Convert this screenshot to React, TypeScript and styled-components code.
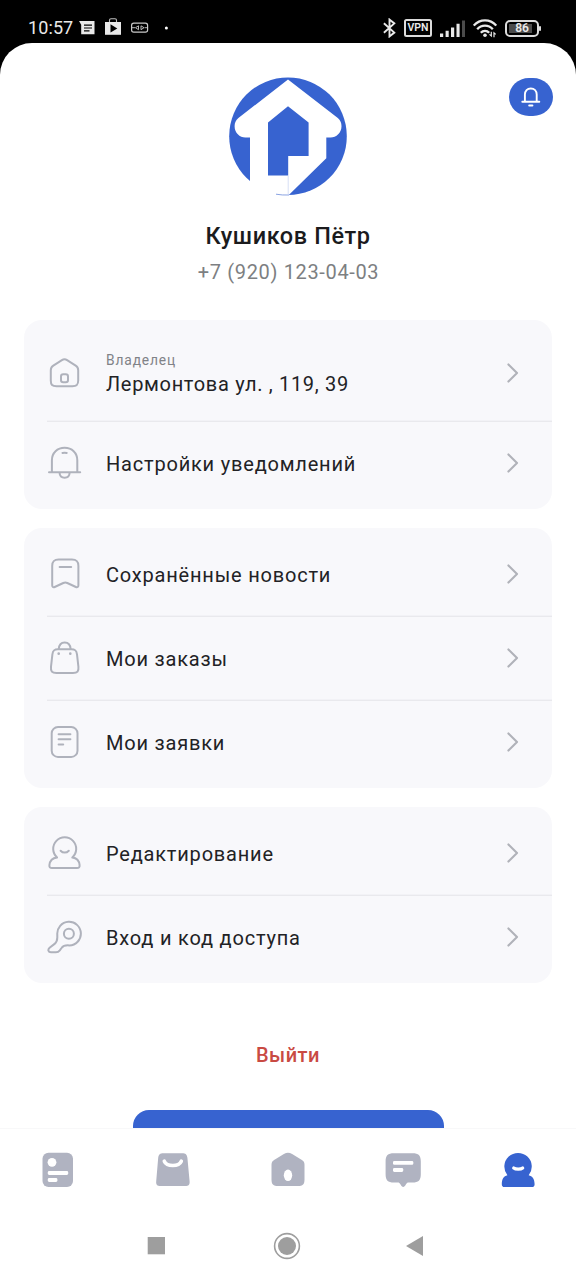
import React from 'react';
import styled, { createGlobalStyle } from 'styled-components';

const GlobalStyle = createGlobalStyle`
  html, body { margin: 0; background: #000; }
  body { font-family: Roboto, "Noto Sans", sans-serif; }
  svg { display: block; flex: none; }
`;

const BLUE = '#3763d0';
const GREY = '#afb2bc';

const Screen = styled.div`
  width: 576px;
  height: 1280px;
  display: flex;
  flex-direction: column;
  background: #000;
  overflow: hidden;
`;

const StatusBar = styled.header`
  height: 43px;
  box-sizing: border-box;
  padding: 12px 33px 0 28px;
  display: flex;
  justify-content: space-between;
  color: #e9e9e9;
`;

const StatusGroup = styled.div<{ $gap: number }>`
  height: 32px;
  display: flex;
  align-items: center;
  gap: ${(p) => p.$gap}px;
`;

const Clock = styled.span`
  width: 46px;
  font-size: 18px;
  line-height: 32px;
  letter-spacing: 0.1px;
  white-space: nowrap;
`;

const Sheet = styled.main`
  flex: 1;
  min-height: 0;
  display: flex;
  flex-direction: column;
  background: #fff;
  border-radius: 32px 32px 0 0;
`;

const Content = styled.div`
  height: 1086px;
  box-sizing: border-box;
  padding: 33px 24px 0;
  display: flex;
  flex-direction: column;
  overflow: hidden;
`;

const Profile = styled.section`
  flex: none;
  height: 244px;
  display: grid;
  grid-template-columns: 1fr 120px 1fr;
  grid-template-rows: 120px 64px 1fr;
  align-items: start;
  text-align: center;
`;

const Logo = styled.svg`
  grid-column: 2;
`;

const BellButton = styled.button`
  grid-column: 3;
  justify-self: end;
  width: 44px;
  height: 38px;
  margin: 2px -1px 0 0;
  padding: 0;
  border: 0;
  border-radius: 20px / 19px;
  background: ${BLUE};
  display: grid;
  place-items: center;
`;

const Name = styled.h1`
  grid-column: 1 / -1;
  margin: 0;
  padding-top: 26px;
  font-size: 23.5px;
  line-height: 28px;
  font-weight: 500;
  letter-spacing: 0.6px;
  color: #1b1b1d;
`;

const Phone = styled.p`
  grid-column: 1 / -1;
  margin: 0;
  padding-left: 1px;
  font-size: 20px;
  line-height: 24px;
  letter-spacing: 0.65px;
  color: #7d7f82;
`;

const Cards = styled.div`
  display: flex;
  flex-direction: column;
  gap: 19.2px;
`;

const Card = styled.section`
  padding: 4px 0;
  border-radius: 18px;
  background: #f8f8fb;
`;

const Row = styled.div<{ $tall?: boolean }>`
  height: ${(p) => (p.$tall ? 97 : 84)}px;
  box-sizing: border-box;
  margin-left: 23px;
  padding-right: 32px;
  display: flex;
  align-items: center;

  & + & {
    box-shadow: 0 -0.5px 0 #ececf0, 0 1px 0 #e9e9ed inset;
  }
`;

const RowText = styled.div<{ $tall?: boolean }>`
  flex: 1;
  margin-left: 23px;
  padding-top: ${(p) => (p.$tall ? 4 : 2.6)}px;
  display: flex;
  flex-direction: column;
`;

const Caption = styled.span`
  margin-bottom: 1.5px;
  font-size: 13.8px;
  line-height: 18px;
  letter-spacing: 0.85px;
  color: #808287;
`;

const Label = styled.span<{ $tight?: boolean }>`
  font-size: 20px;
  line-height: 27px;
  letter-spacing: ${(p) => (p.$tight ? 0.68 : 0.8)}px;
  color: #222225;
  white-space: nowrap;
`;

const Logout = styled.button`
  align-self: center;
  margin-top: 60px;
  padding: 0;
  border: 0;
  background: none;
  font-family: inherit;
  font-size: 20px;
  line-height: 24px;
  font-weight: 500;
  letter-spacing: 0.5px;
  color: #c94a43;
`;

const PrimaryButton = styled.div`
  align-self: center;
  flex: none;
  width: 311px;
  height: 60px;
  margin-top: 42.6px;
  border-radius: 16px;
  background: ${BLUE};
`;

const TabBar = styled.nav`
  height: 82px;
  box-sizing: border-box;
  padding-bottom: 1px;
  display: grid;
  grid-template-columns: repeat(5, 1fr);
  justify-items: center;
  align-items: center;
  box-shadow: 0 -1px 0 #f8f8f9;
`;

const SystemBar = styled.footer`
  height: 69px;
  box-sizing: border-box;
  padding: 0 153px 0 147px;
  display: flex;
  justify-content: space-between;
  align-items: center;
`;

const LineIcon = ({ children }: { children: React.ReactNode }) => (
  <svg width="36" height="36" viewBox="0 0 36 36" fill="none" stroke={GREY} strokeWidth="2" strokeLinecap="round" strokeLinejoin="round">
    {children}
  </svg>
);

const icons = {
  home: (
    <LineIcon>
      <path d="M3.8 15.2C3.8 12.8 4.4 11.8 6.3 10.6L14.9 5.1C16.8 3.9 18.2 3.9 20.1 5.1L28.7 10.6C30.6 11.8 31.2 12.8 31.2 15.2V25.5C31.2 29.9 29.8 31.2 25.4 31.2H9.6C5.2 31.2 3.8 29.9 3.8 25.5Z" />
      <rect x="14" y="19.2" width="7" height="8" rx="2.2" />
    </LineIcon>
  ),
  bell: (
    <LineIcon>
      <path d="M4.9 27.3V15.2C4.9 7.6 10.4 2.8 17.6 2.8S30.3 7.6 30.3 15.2V27.3M2 27.3H33.2M12.5 27.5C12.7 30.8 14.6 32.8 17.6 32.8S22.5 30.8 22.7 27.5M15.4 7.9Q17.6 7.5 19.8 7.9" />
    </LineIcon>
  ),
  bookmark: (
    <LineIcon>
      <path d="M5.2 10C5.2 5.2 6.9 3.5 11.7 3.5H24.9C29.7 3.5 31.4 5.2 31.4 10V29.3C31.4 31 30.4 31.7 28.9 31L20.3 27C18.8 26.3 17.8 26.3 16.3 27L7.7 31C6.2 31.7 5.2 31 5.2 29.3Z" />
      <path d="M12.6 11H24.2" />
    </LineIcon>
  ),
  bag: (
    <LineIcon>
      <path d="M5.4 14.3C5.9 10.5 7.3 9.3 11 9.3H24.4C28.1 9.3 29.5 10.5 30 14.3L31.4 26.6C31.9 31.4 30.4 33 26 33H9.4C5 33 3.5 31.4 4 26.6Z" />
      <path d="M11.8 9C12 5 14.2 2.4 17.7 2.4S23.4 5 23.6 9" />
      <path d="M11.7 13.6V13.7M23.3 13.6V13.7" strokeWidth="2.6" />
    </LineIcon>
  ),
  list: (
    <LineIcon>
      <rect x="4.7" y="3" width="25.8" height="30" rx="6.3" />
      <path d="M11.6 10.2H23.4M11.6 15.3H23.4M11.6 20.5H16.2" />
    </LineIcon>
  ),
  user: (
    <LineIcon>
      <path d="M10.1 22.5A11.5 11.5 0 1 1 25.3 22.5C29.8 23 32.2 25.8 32.6 30.2C32.8 32.2 32 33 30 33H5C3 33 2.2 32.2 2.4 30.2C2.8 25.8 5.6 23 10.1 22.5Z" />
      <path d="M13.6 15.7C16 18.2 19.4 18.2 21.8 15.7" />
    </LineIcon>
  ),
  key: (
    <LineIcon>
      <path d="M10.3 15.5A11.8 11.8 0 1 1 22.3 26.4C17.6 26 15.9 27 14.5 29L12.8 31.3C11.7 32.7 10.7 33.2 8.9 33.2H4C1.2 33.2.5 30.6 2.6 28.8L7.6 24.9C9.8 23 10.3 21 10.3 18.5Z" />
      <circle cx="21.9" cy="14.8" r="5" />
    </LineIcon>
  ),
};

const Chevron = () => (
  <svg width="14" height="24" viewBox="0 0 14 24" fill="none" stroke="#b0b2b9" strokeWidth="2.1" strokeLinecap="round" strokeLinejoin="round">
    <path d="M2.4 3.4L11 12L2.4 20.6" />
  </svg>
);

type Item = { icon: keyof typeof icons; label: string; caption?: string };

const groups: Item[][] = [
  [
    { icon: 'home', label: 'Лермонтова ул. , 119, 39', caption: 'Владелец' },
    { icon: 'bell', label: 'Настройки уведомлений' },
  ],
  [
    { icon: 'bookmark', label: 'Сохранённые новости' },
    { icon: 'bag', label: 'Мои заказы' },
    { icon: 'list', label: 'Мои заявки' },
  ],
  [
    { icon: 'user', label: 'Редактирование' },
    { icon: 'key', label: 'Вход и код доступа' },
  ],
];

const MenuRow = ({ icon, label, caption }: Item) => (
  <Row $tall={!!caption}>
    {icons[icon]}
    <RowText $tall={!!caption}>
      {caption && <Caption>{caption}</Caption>}
      <Label $tight={!!caption}>{label}</Label>
    </RowText>
    <Chevron />
  </Row>
);

const HouseLogo = () => (
  <Logo width="120" height="120" viewBox="0 0 120 120">
    <circle cx="60" cy="60.2" r="58.8" fill={BLUE} />
    <path
      d="M60 3.6L109.8 42C112.4 44.2 113.5 46.8 113.5 50.2C113.5 56.8 108.3 61.4 102.6 61.4H98.3V82.2L60.8 119H22V61.4H17.4C11.7 61.4 6.6 56.8 6.6 50.2C6.6 46.8 7.8 44.2 10.4 42Z"
      fill="#fff"
    />
    <path d="M40 46.5L60 30.2L80.6 46.5V80H60.2V99.6H40Z" fill={BLUE} />
    <path d="M60.2 99.6V118" stroke="#c6d2f1" strokeWidth="0.7" />
    <path d="M48 118.2Q54 119.3 61 119" stroke="#6c8cda" strokeWidth="0.8" fill="none" />
  </Logo>
);

const StatusLeft = () => (
  <StatusGroup $gap={5}>
    <Clock>10:57</Clock>
    <svg width="92" height="32" viewBox="79 12 92 32">
      <path d="M79 21H94.5V34.3H81.2V24.7Z" fill="#e9e9e9" />
      <path d="M84 25.2H92M84 28H92M84 30.8H89.5" stroke="#000" strokeWidth="1.2" />
      <path d="M105 22H121V34.8H105Z" fill="#e9e9e9" />
      <path d="M109.5 22V20.3Q109.5 18.8 111 18.8H115Q116.5 18.8 116.5 20.3V22" fill="none" stroke="#bdbdbd" strokeWidth="1.1" />
      <path d="M110.5 24.3V32.5L117.3 28.4Z" fill="#000" />
      <rect x="131.6" y="23.2" width="16" height="9" rx="2.2" fill="none" stroke="#c9c9c9" strokeWidth="1.2" />
      <path d="M131.5 27.7H135M144.5 27.7H148M138.5 25.8L135.5 27.7L138.5 29.7ZM141 25.8L144 27.7L141 29.7Z" fill="none" stroke="#c9c9c9" strokeWidth="0.9" />
      <circle cx="166.4" cy="28" r="1.5" fill="#fff" />
    </svg>
  </StatusGroup>
);

const VpnBadge = styled.span`
  width: 28px;
  height: 18px;
  box-sizing: border-box;
  border: 2px solid #dcdcdc;
  border-radius: 2.5px;
  font-size: 10.5px;
  line-height: 14.5px;
  font-weight: 600;
  text-align: center;
`;

const Battery = styled.span`
  width: 34px;
  height: 17px;
  box-sizing: border-box;
  margin-right: 4px;
  border: 2px solid #dcdcdc;
  border-radius: 5px;
  background: linear-gradient(#4b4b4b, #4b4b4b) 2px 2px / 23px 9px no-repeat;
  font-size: 12px;
  line-height: 13.5px;
  font-weight: 600;
  text-align: center;
  position: relative;

  &::after {
    content: '';
    position: absolute;
    left: 32px;
    top: 4px;
    width: 2px;
    height: 5px;
    border-radius: 1px;
    background: #dcdcdc;
  }
`;

const StatusRight = () => (
  <StatusGroup $gap={8}>
    <svg width="13" height="20" viewBox="0 0 13 20" fill="none" stroke="#e9e9e9" strokeWidth="1.9">
      <path d="M.9 5.3L11.3 14.6L6.5 18.4V1.6L11.3 5.4L.9 14.7" />
    </svg>
    <VpnBadge>VPN</VpnBadge>
    <svg width="25" height="17" viewBox="0 0 25 17">
      <path d="M0 13.5H3.2V17H0ZM5.6 10.8H8.7V17H5.6ZM11 7.4H14.2V17H11ZM16.5 3.8H19.6V17H16.5Z" fill="#e9e9e9" />
      <path d="M22 .5H25V17H22Z" fill="#4b4b4b" />
    </svg>
    <svg width="24" height="19" viewBox="0 0 24 19" fill="none" stroke="#e9e9e9" strokeWidth="2.3">
      <path d="M.8 6.6C7-.3 17-.3 23.2 6.6M4.2 10.3C8.5 5.5 15.5 5.5 19.8 10.3M7.8 13.8C10.1 11.3 13.9 11.3 16.2 13.8" />
      <circle cx="12" cy="16.3" r="1.8" fill="#e9e9e9" stroke="none" />
      <path d="M18.3 12.8V17L16.5 15.4M21 18.2V13.8L22.7 15.4" strokeWidth="1.2" />
    </svg>
    <Battery>86</Battery>
  </StatusGroup>
);

const Tab = ({ active, children }: { active?: boolean; children: React.ReactNode }) => (
  <svg width="36" height="36" viewBox="0 0 36 36" fill={active ? BLUE : '#b0b3c1'}>
    {children}
  </svg>
);

export default function App() {
  return (
    <Screen>
      <GlobalStyle />
      <StatusBar>
        <StatusLeft />
        <StatusRight />
      </StatusBar>
      <Sheet>
        <Content>
          <Profile>
            <HouseLogo />
            <BellButton aria-label="Уведомления">
              <svg width="22" height="22" viewBox="0 0 22 22" fill="none" stroke="#fff" strokeWidth="1.9" strokeLinecap="round">
                <path d="M4.9 15.8V8.6C4.9 4.9 7.3 2.5 10.8 2.5S16.7 4.9 16.7 8.6V15.8M2.3 15.8H19.3" />
                <path d="M9.2 19.6H12.4" strokeWidth="2" />
              </svg>
            </BellButton>
            <Name>Кушиков Пётр</Name>
            <Phone>+7 (920) 123-04-03</Phone>
          </Profile>
          <Cards>
            {groups.map((rows) => (
              <Card key={rows[0].label}>
                {rows.map((row) => (
                  <MenuRow key={row.label} {...row} />
                ))}
              </Card>
            ))}
          </Cards>
          <Logout>Выйти</Logout>
          <PrimaryButton />
        </Content>
        <TabBar>
          <Tab>
            <rect x="2.5" y="0.8" width="30.5" height="34.2" rx="6" />
            <circle cx="12" cy="10.3" r="4.4" fill="#fff" />
            <rect x="7.8" y="19" width="20.4" height="4" rx="1.4" fill="#fff" />
            <rect x="7.8" y="26" width="9.6" height="4" rx="1.4" fill="#fff" />
          </Tab>
          <Tab>
            <path d="M3.2 5.8C3.6 2.4 5 1.2 8.4 1.2H27.2C30.6 1.2 32 2.4 32.4 5.8L34.6 29.2C34.9 32.6 33.6 34 30.2 34H5.6C2.2 34 .9 32.6 1.2 29.2Z" />
            <path d="M9.3 9.2C11.8 15 23.8 15 26.3 9.2" fill="none" stroke="#fff" strokeWidth="3.6" strokeLinecap="round" />
          </Tab>
          <Tab>
            <path d="M1.5 13C1.5 10.2 2.3 9.1 4.5 7.7L13.9 1.9C16.8.2 19.2.2 22.1 1.9L31.5 7.7C33.7 9.1 34.5 10.2 34.5 13V27.2C34.5 32.4 32.9 34 27.7 34H8.3C3.1 34 1.5 32.4 1.5 27.2Z" />
            <ellipse cx="18" cy="23.3" rx="4.2" ry="5.8" fill="#fff" />
          </Tab>
          <Tab>
            <path d="M.6 9.5C.6 3.4 2.8 1.2 8.9 1.2H27.5C33.6 1.2 35.8 3.4 35.8 9.5V22.2C35.8 28.3 33.6 30.5 27.5 30.5H23.5C22.3 30.5 21.8 31.1 21 32.3C19.1 35.8 17.3 35.8 15.4 32.3C14.6 31.1 14.1 30.5 12.9 30.5H8.9C2.8 30.5.6 28.3.6 22.2Z" />
            <rect x="8" y="9" width="20.3" height="3.8" rx="1.3" fill="#fff" />
            <rect x="8" y="15.9" width="10.2" height="4" rx="1.3" fill="#fff" />
          </Tab>
          <Tab active>
            <path d="M7.4 23.2A13.7 13.7 0 1 1 28.7 23.2C32.3 24 34.6 27 34.6 32.2Q34.6 35 32 35H4.4Q1.8 35 1.8 32.2C1.8 27 3.8 24 7.4 23.2Z" />
            <path d="M13.7 16C15.6 17.6 20.8 17.6 22.7 16" fill="none" stroke="#fff" strokeWidth="3.2" strokeLinecap="round" />
          </Tab>
        </TabBar>
        <SystemBar>
          <svg width="18" height="18" viewBox="0 0 18 18">
            <rect x="0.7" y="0" width="17.3" height="17.3" fill="#9e9e9e" />
          </svg>
          <svg width="30" height="28" viewBox="0 0 30 28">
            <circle cx="16" cy="14" r="12.4" fill="none" stroke="#9e9e9e" strokeWidth="1.6" />
            <circle cx="16" cy="14" r="9" fill="#9e9e9e" />
          </svg>
          <svg width="17" height="20" viewBox="0 0 17 20">
            <path d="M17 0V20L0 10Z" fill="#9e9e9e" />
          </svg>
        </SystemBar>
      </Sheet>
    </Screen>
  );
}
